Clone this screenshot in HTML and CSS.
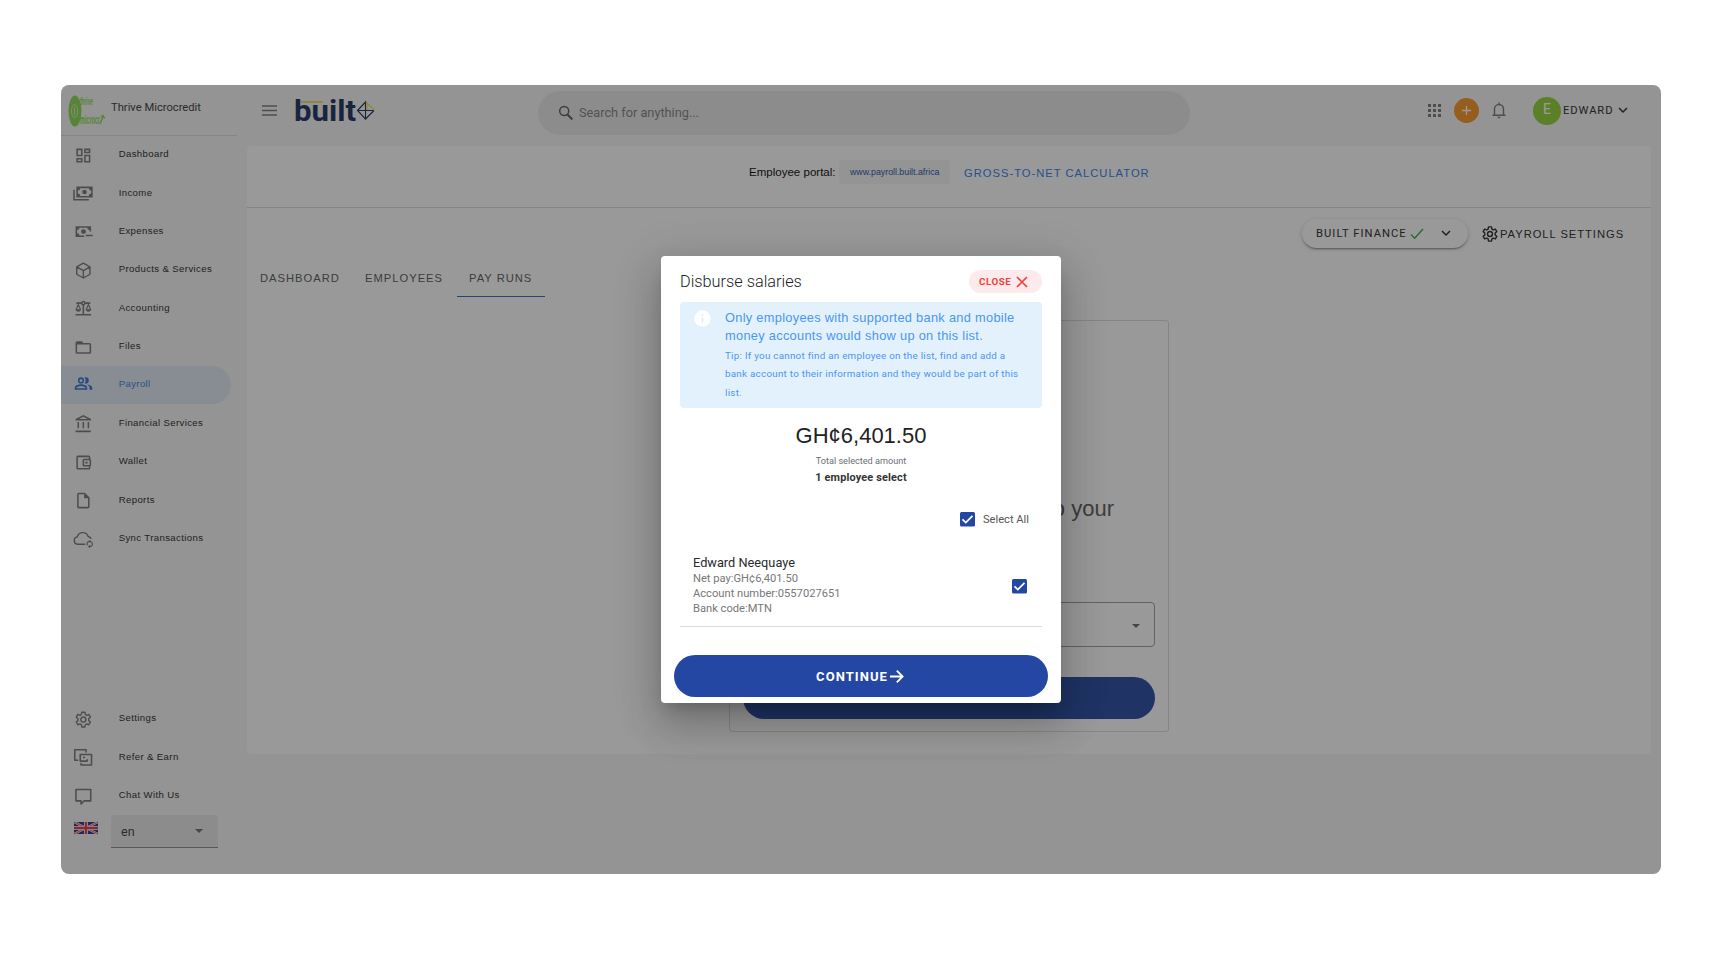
FILE: index.html
```html
<!DOCTYPE html>
<html lang="en">
<head>
<meta charset="utf-8">
<title>Built Payroll</title>
<link rel="stylesheet" href="styles.css">
</head>
<body>
<div class="window">
  <aside class="sidebar">
    <div class="company">
      <svg class="company-logo" width="38" height="40" viewBox="0 -3 38 40">
        <ellipse cx="7" cy="17" rx="6.500" ry="15.500"/>
        <ellipse cx="6.500" cy="17" rx="3" ry="6.500" fill="none" stroke="#cdeeb4" stroke-width="1"/>
        <path d="M6.500 13v8" stroke="#cdeeb4" stroke-width="1"/>
        <text x="12" y="11" font-size="11" textLength="13" lengthAdjust="spacingAndGlyphs">thrive</text>
        <text x="12" y="30" font-size="12" textLength="20" lengthAdjust="spacingAndGlyphs">microcr</text>
        <path d="M32 30l3.500-9M33 22l4 2" stroke="#86d94f" stroke-width="1.500"/>
      </svg>
      <span>Thrive Microcredit</span>
    </div>
    <nav class="nav">
      <a class="item"><svg class="ic" viewBox="0 0 24 24"><path d="M19 5v2h-4V5h4M9 5v6H5V5h4m10 8v6h-4v-6h4M9 17v2H5v-2h4M21 3h-8v6h8V3zM11 3H3v10h8V3zm10 8h-8v10h8V11zm-10 4H3v6h8v-6z"/></svg>Dashboard</a>
      <a class="item"><svg class="ic" viewBox="0 0 24 24"><path d="M3 3v14h21V3H3m5 12a3 3 0 0 0-3-3V8a3 3 0 0 0 3-3h11a3 3 0 0 0 3 3v4a3 3 0 0 0-3 3H8zM13.500 7a3 3 0 1 0 0 6 3 3 0 0 0 0-6zM-1 7h2v12h18v2H-1V7z" fill-rule="evenodd"/></svg>Income</a>
      <a class="item"><svg class="ic" viewBox="0 0 24 24"><path d="M2 5v14h11v-2H7a3 3 0 0 0-3-3v-4a3 3 0 0 0 3-3h10a3 3 0 0 0 3 3v2h2V5H2zm10 4a3 3 0 1 0 0 6 3 3 0 0 0 1.500-.4V14h1.100A3 3 0 0 0 12 9zm3 7h9v2h-9z"/></svg>Expenses</a>
      <a class="item"><svg class="ic" viewBox="0 0 24 24"><path d="M12 2.500l8.500 4.800v9.400L12 21.500l-8.500-4.800V7.300zM3.500 7.300L12 12l8.500-4.700M12 12v9.500" fill="none" stroke="#747474" stroke-width="1.800" stroke-linejoin="round"/></svg>Products &amp; Services</a>
      <a class="item"><svg class="ic" viewBox="0 0 24 24"><path d="M13 7.830A3 3 0 0 0 14.830 6H18l-3 7c0 1.660 1.570 3 3.500 3s3.500-1.340 3.500-3l-3-7h2V4h-6.170a3 3 0 0 0-5.660 0H3v2h2l-3 7c0 1.660 1.570 3 3.500 3S9 14.660 9 13L6 6h3.170A3 3 0 0 0 11 7.830V19H2v2h20v-2h-9V7.830zM20.370 13h-3.740l1.870-4.360L20.370 13zm-13 0H3.630L5.500 8.640 7.370 13zM12 6a1 1 0 1 1 0-2 1 1 0 0 1 0 2z"/></svg>Accounting</a>
      <a class="item"><svg class="ic" viewBox="0 0 24 24"><path d="M20 6h-8l-2-2H4a2 2 0 0 0-2 2v12a2 2 0 0 0 2 2h16a2 2 0 0 0 2-2V8a2 2 0 0 0-2-2zm0 12H4V8h16v10z"/></svg>Files</a>
      <a class="item active"><svg class="ic" viewBox="0 0 24 24"><path d="M16.500 13.100c2 1 3.500 2.400 3.500 4.400V20h3.500v-2.500c0-2.700-3.800-4.100-7-4.400zM15 12a4 4 0 0 0 0-8c-.5 0-1 .1-1.400.3a6 6 0 0 1 0 7.400c.4.200.9.300 1.400.300zM9 12a4 4 0 1 0 0-8 4 4 0 0 0 0 8zm0-6a2 2 0 1 1 0 4 2 2 0 0 1 0-4zM9 13c-2.700 0-8 1.300-8 4.500V20h16v-2.500C17 14.300 11.700 13 9 13zm6 5H3v-.5c0-1 3-2.500 6-2.500s6 1.500 6 2.500v.5z"/></svg>Payroll</a>
      <a class="item"><svg class="ic" viewBox="0 0 24 24"><path d="M6.500 10h-2v8h2v-8zm6.500 0h-2v8h2v-8zm8.500 11H2v2h19.500v-2zm-2-11h-2v8h2v-8zM12 3.260L17.500 6h-11L12 3.260M12 1L2 6v2h20V6L12 1z"/></svg>Financial Services</a>
      <a class="item"><svg class="ic" viewBox="0 0 24 24"><path d="M21 7.280V5a2 2 0 0 0-2-2H5a2 2 0 0 0-2 2v14a2 2 0 0 0 2 2h14a2 2 0 0 0 2-2v-2.280A2 2 0 0 0 22 15V9a2 2 0 0 0-1-1.720zM20 9v6h-7V9h7zM5 19V5h14v2h-6a2 2 0 0 0-2 2v6a2 2 0 0 0 2 2h6v2H5z"/><circle cx="16" cy="12" r="1.500"/></svg>Wallet</a>
      <a class="item"><svg class="ic" viewBox="0 0 24 24"><path d="M14 2H6a2 2 0 0 0-2 2v16a2 2 0 0 0 2 2h12a2 2 0 0 0 2-2V8l-6-6zM6 4h7v5h5v11H6V4z"/></svg>Reports</a>
      <a class="item"><svg class="ic wide" viewBox="0 0 24 24"><path d="M14.500 18H5a4.800 4.800 0 0 1-.8-9.500 7.300 7.300 0 0 1 14-.5c1.700.3 3.300 1.300 4 3" fill="none" stroke="#747474" stroke-width="1.800"/><path d="M17.300 19.500a3.300 3.300 0 0 1 3.700-5M22.500 15a3.300 3.300 0 0 1-2.500 5.800" fill="none" stroke="#747474" stroke-width="1.500"/><path d="M20 12.500l2.800 2-2.800 2zM20.600 18.500v4.500l-2.800-2.200z"/></svg>Sync Transactions</a>
    </nav>
    <nav class="nav nav-bottom">
      <a class="item"><svg class="ic" viewBox="0 0 24 24"><g fill="none" stroke="#747474" stroke-width="1.800" stroke-linejoin="round"><circle cx="12" cy="12" r="3.300"/><path d="M10 2.500h4l.5 2.900 1.900 1.100 2.700-1.100 2 3.500-2.200 1.800v2.600l2.200 1.800-2 3.500-2.700-1.100-1.900 1.100-.5 2.900h-4l-.5-2.900-1.900-1.100-2.700 1.100-2-3.500 2.200-1.800v-2.600L2.900 8.900l2-3.500 2.700 1.100 1.900-1.100z"/></g></svg>Settings</a>
      <a class="item"><svg class="ic wide" viewBox="0 0 24 24"><path d="M15.500 5.500V2H1v13.500h4.500M17 14v2.500H8V8h14.500v13.500H9V19M8 11.500V8M14 12h-2.500" fill="none" stroke="#747474" stroke-width="2" stroke-linejoin="round"/></svg>Refer &amp; Earn</a>
      <a class="item"><svg class="ic" viewBox="0 0 24 24"><path d="M2.500 3h19v14.500H13l-4 4v-4H2.500z" fill="none" stroke="#747474" stroke-width="2" stroke-linejoin="round"/></svg>Chat With Us</a>
    </nav>
    <div class="lang">
      <svg width="24" height="12" viewBox="0 0 24 12">
        <path fill="#1c2c8c" d="M0 0h24v12H0z"/>
        <path d="M0 0l24 12M24 0L0 12" stroke="#fff" stroke-width="2.200"/>
        <path d="M0 0l24 12M24 0L0 12" stroke="#e02f3c" stroke-width=".9"/>
        <path d="M12 0v12M0 6h24" stroke="#fff" stroke-width="4"/>
        <path d="M12 0v12M0 6h24" stroke="#e02f3c" stroke-width="2.400"/>
      </svg>
      <div class="lang-select"><span>en</span><i class="caret"></i></div>
    </div>
  </aside>

  <main class="main">
    <header class="topbar">
      <svg class="menu" width="15" height="11" viewBox="0 0 15 11"><path d="M0 1h15M0 5.500h15M0 10h15" stroke="#747474" stroke-width="1.500"/></svg>
      <svg class="brand" width="84" height="44" viewBox="0 -7 84 44">
        <text x="0" y="25" textLength="62" lengthAdjust="spacingAndGlyphs">built</text>
        <path d="M7 5.800h22" stroke="#f2d54a" stroke-width="1.800"/>
        <path d="M63.500 14.500L71.500 6v17zM71.500 23l8.500-8.500M63.500 14.500H80" fill="none" stroke="#14295a" stroke-width="1.100"/>
        <path d="M72 6l8.500 8.500M73 6v8" fill="none" stroke="#f2d54a" stroke-width="1.100"/>
      </svg>
      <div class="search">
        <svg width="16" height="16" viewBox="0 0 16 16"><circle cx="6.200" cy="6" r="4.500" fill="none" stroke="#555" stroke-width="1.500"/><path d="M9.500 9.500l4.800 5" stroke="#555" stroke-width="1.900"/></svg>
        <span>Search for anything...</span>
      </div>
      <div class="actions">
        <svg width="13" height="13" viewBox="0 0 13 13"><path d="M0 0h3v3H0zM5 0h3v3H5zM10 0h3v3h-3zM0 5h3v3H0zM5 5h3v3H5zM10 5h3v3h-3zM0 10h3v3H0zM5 10h3v3H5zM10 10h3v3h-3z" fill="#747474"/></svg>
        <span class="plus"><svg width="9" height="9" viewBox="0 0 9 9"><path d="M4.500 0v9M0 4.500h9" stroke="#fff" stroke-width="1.300"/></svg></span>
        <svg class="bell" width="14" height="17" viewBox="0 0 14 17"><path d="M.5 13.200h13M2.500 13V7a4.500 4.500 0 0 1 9 0v6M7 2.500V.5" fill="none" stroke="#747474" stroke-width="1.400"/><path d="M5.500 14.800h3a1.500 1.500 0 0 1-3 0z" fill="#747474"/></svg>
        <span class="avatar">E</span>
        <span class="user">EDWARD</span>
        <svg class="chev" width="10" height="7" viewBox="0 0 10 7"><path d="M1 1l4 4 4-4" fill="none" stroke="#222" stroke-width="1.500"/></svg>
      </div>
    </header>

    <section class="card">
      <div class="portal">
        <span class="portal-label">Employee portal:</span>
        <span class="chip">www.payroll.built.africa</span>
        <span class="gross">GROSS-TO-NET CALCULATOR</span>
      </div>
      <div class="tools">
        <div class="finance">
          <span>BUILT FINANCE</span>
          <svg class="tick" width="14" height="12" viewBox="0 0 14 12"><path d="M1 6.500l3.700 3.700L13 1" fill="none" stroke="#2ea84a" stroke-width="1.400"/></svg>
          <svg width="10" height="7" viewBox="0 0 10 7"><path d="M1 1l4 4 4-4" fill="none" stroke="#222" stroke-width="1.500"/></svg>
        </div>
        <svg class="set-gear" width="18" height="18" viewBox="0 0 24 24"><g fill="none" stroke="#222" stroke-width="1.900" stroke-linejoin="round"><circle cx="12" cy="12" r="3.300"/><path d="M10 2.500h4l.5 2.900 1.900 1.100 2.700-1.100 2 3.500-2.200 1.800v2.600l2.200 1.800-2 3.500-2.700-1.100-1.900 1.100-.5 2.900h-4l-.5-2.900-1.900-1.100-2.700 1.100-2-3.500 2.200-1.800v-2.600L2.900 8.900l2-3.500 2.700 1.100 1.900-1.100z"/></g></svg>
        <span class="set-label">PAYROLL SETTINGS</span>
      </div>
      <div class="tabs"><span>DASHBOARD</span><span>EMPLOYEES</span><span class="on">PAY RUNS</span></div>
      <div class="panel">
        <p class="panel-title">to your</p>
        <div class="panel-select"><i class="caret"></i></div>
        <div class="panel-button"></div>
      </div>
    </section>
  </main>

  <div class="overlay">
    <div class="dialog">
      <div class="dialog-head">
        <h2>Disburse salaries</h2>
        <button class="close"><span>CLOSE</span><svg width="12" height="12" viewBox="0 0 12 12"><path d="M1 1l10 10M11 1L1 11" stroke="#ef4136" stroke-width="1.700"/></svg></button>
      </div>
      <div class="alert">
        <svg width="17" height="17" viewBox="0 0 17 17"><circle cx="8.500" cy="8.500" r="8.200" fill="#fff"/><path d="M8.500 7.500v5M8.500 4.500v1.500" stroke="#dcecf8" stroke-width="1.400"/></svg>
        <div>
          <p class="alert-main">Only employees with supported bank and mobile<br>money accounts would show up on this list.</p>
          <p class="alert-tip">Tip: If you cannot find an employee on the list, find and add a<br>bank account to their information and they would be part of this<br>list.</p>
        </div>
      </div>
      <div class="amount">GH¢6,401.50</div>
      <div class="amount-label">Total selected amount</div>
      <div class="amount-count">1 employee select</div>
      <div class="select-all">
        <svg width="15" height="15" viewBox="0 0 15 15"><rect width="15" height="14.500" rx="1.500" fill="#2347a2"/><path d="M2.500 7.300l3.300 3.300 6.700-6.800" fill="none" stroke="#fff" stroke-width="1.700"/></svg>
        <span>Select All</span>
      </div>
      <div class="employee">
        <div>
          <p class="name">Edward Neequaye</p>
          <p>Net pay:GH¢6,401.50</p>
          <p>Account number:0557027651</p>
          <p>Bank code:MTN</p>
        </div>
        <svg width="15" height="15" viewBox="0 0 15 15"><rect width="15" height="14.500" rx="1.500" fill="#2347a2"/><path d="M2.500 7.300l3.300 3.300 6.700-6.800" fill="none" stroke="#fff" stroke-width="1.700"/></svg>
      </div>
      <button class="continue"><span>CONTINUE</span><svg width="14" height="13" viewBox="0 0 14 13"><path d="M0 6.500h12.500M6.800.7l5.800 5.800-5.800 5.800" fill="none" stroke="#fff" stroke-width="1.800"/></svg></button>
    </div>
  </div>
</div>
</body>
</html>
```
FILE: styles.css
```css
* { box-sizing: border-box; }
body { margin: 0; padding: 85px 61px; background: #fff; font-family: Roboto, "Liberation Sans", sans-serif; color: #222; }
p, h2 { margin: 0; }
svg { display: block; flex: none; overflow: visible; }
button { border: 0; font-family: inherit; padding: 0; }
span, a { white-space: nowrap; }

.window { position: relative; display: flex; width: 1600px; height: 789px; border-radius: 8px; overflow: hidden; background: #f6f6f6; }

.sidebar { width: 186px; flex: none; display: flex; flex-direction: column; }
.company { display: flex; width: 176px; height: 51px; border-bottom: 1px solid #dadada; padding: 6px 0 0 7px; font-size: 11.2px; line-height: 33px; gap: 5px; }
.company-logo { fill: #86d94f; font-family: "Liberation Sans", sans-serif; font-weight: 700; }
.company span { color: #333; }
.nav { display: flex; flex-direction: column; width: 170px; }
.item { display: flex; align-items: center; gap: 26px; height: 38.4px; padding: 0 0 3px 13px; font: 9.6px "Liberation Sans", sans-serif; letter-spacing: 0.37px; color: #222; }
.ic { width: 18.700px; height: 19.2px; fill: #747474; position: relative; top: 1.500px; }
.active { background: #dfe9f5; color: #2f7de0; border-radius: 0 19px 19px 0; position: relative; top: -0.500px; }
.active .ic { fill: #2f6fd0; top: 0.5px; }
.nav-bottom { margin-top: 142px; }
.lang { display: flex; padding-left: 13px; gap: 13px; }
.lang svg { margin-top: 7px; }
.lang-select { width: 107px; height: 33px; background: #e8e8e8; border-bottom: 1px solid #888; border-radius: 4px 4px 0 0; display: flex; align-items: center; justify-content: space-between; padding: 0 15px 0 10px; font-size: 12.500px; color: #333; }
.caret { border: 4px solid transparent; border-top-color: #666; border-bottom: 0; }

.main { width: 1404px; flex: none; }
.topbar { display: flex; height: 61px; }
.menu { margin: 20px 0 0 15px; }
.brand { margin: 4px 0 0 17px; fill: #14295a; font: 700 29px Roboto, sans-serif; }
.search { margin: 6px 0 0 160px; width: 652px; height: 44px; border-radius: 22px; background: #e8e8e8; display: flex; align-items: center; padding: 0 0 2px 20px; gap: 5px; font-size: 12.740px; color: #7d7d7d; flex: none; }
.search svg { margin-top: 2px; }
.actions { display: flex; align-items: center; height: 51px; margin-left: 238px; }
.plus { width: 25px; height: 25px; border-radius: 50%; background: #f7931e; display: flex; align-items: center; justify-content: center; margin: 0 13px; }
.avatar { width: 28px; height: 28px; border-radius: 50%; background: #8ed12f; color: #fff; font-size: 14px; line-height: 25px; text-align: center; margin: 0 2px 0 27px; }
.user { font-size: 11.2px; letter-spacing: .92px; }
.chev { margin: 0 0 0 5px; }

.card { background: #fff; height: 608px; border-radius: 4px; }
.portal { height: 62px; border-bottom: 1px solid #dadada; display: flex; align-items: flex-start; padding: 14px 0 0 502px; font-family: "Liberation Sans", sans-serif; }
.portal-label { font-size: 11.540px; line-height: 24px; color: #000; width: 90px; }
.chip { width: 111px; height: 24px; border-radius: 3px; background: #f6f6f6; font-size: 8.800px; line-height: 24px; padding-left: 11px; color: #174ea6; }
.gross { margin-left: 14px; font-size: 11.2px; letter-spacing: 1px; line-height: 27px; color: #2979e8; }
.tools { display: flex; align-items: center; height: 51px; padding-left: 1055px; }
.finance { width: 166px; height: 29px; border-radius: 15px; box-shadow: 0 2px 2px -1px rgba(0,0,0,.4), 0 1px 4px rgba(0,0,0,.2); display: flex; align-items: center; padding-left: 14px; font-size: 11.2px; letter-spacing: 1.040px; color: #222; }
.tick { margin: 0 17px 0 3px; }
.set-gear { margin: 0 1px 0 13px; }
.set-label { font: 11.2px "Liberation Sans", sans-serif; letter-spacing: .97px; }
.tabs { display: flex; height: 38px; font: 11.2px "Liberation Sans", sans-serif; letter-spacing: 1px; color: #555; line-height: 38px; }
.tabs span { line-height: 38px; padding-left: 13px; width: 105px; }
.tabs .on { width: 88px; padding-left: 12px; border-bottom: 1px solid #2563c7; margin-left: 0; }
.panel { width: 440px; height: 412px; margin: 23px 0 0 482px; border: 1px solid #dadada; border-radius: 3px; padding: 175px 13px 0; }
.panel-title { font: 22px "Liberation Sans", sans-serif; line-height: 26px; color: #555; text-align: right; padding-right: 41px; }
.panel-select { height: 45px; margin-top: 80px; border: 1px solid #999; border-radius: 4px; display: flex; align-items: center; justify-content: flex-end; padding: 2px 14px 0 0; }
.panel-button { height: 42px; margin-top: 30px; border-radius: 21px; background: #1f45a0; }

.overlay { position: absolute; inset: 0; background: rgba(33,33,33,.46); display: flex; justify-content: center; align-items: flex-start; padding-top: 171px; }
.dialog { width: 400px; height: 447px; border-radius: 4px; background: #fff; padding: 14px 19px 0; box-shadow: 0 11px 15px -7px rgba(0,0,0,.2), 0 24px 38px 3px rgba(0,0,0,.14), 0 9px 46px 8px rgba(0,0,0,.12); }
.dialog-head { display: flex; justify-content: space-between; height: 32px; }
h2 { font-size: 16.300px; font-weight: 300; line-height: 23px; color: #222; }
.close { width: 73px; height: 23px; border-radius: 12px; background: #fdeaed; color: #ef4136; font-size: 9.800px; font-weight: 700; letter-spacing: .5px; display: flex; align-items: center; gap: 5px; padding-left: 10px; }
.alert { height: 106px; border-radius: 4px; background: #e3f1fd; display: flex; gap: 14px; padding: 7px 0 0 14px; color: #4a96f3; }
.alert svg { margin-top: 1px; }
.alert-main { font-family: "Liberation Sans", sans-serif; font-size: 12.800px; line-height: 18px; letter-spacing: .3px; }
.alert-tip { font-size: 9.800px; line-height: 18.400px; letter-spacing: .27px; padding-top: 2px; }
.amount { text-align: center; font: 22px "Liberation Sans", sans-serif; line-height: 28px; margin-top: 14px; color: #222; }
.amount-label { text-align: center; font-size: 9.130px; line-height: 14px; margin-top: 4px; color: #6a6f78; }
.amount-count { text-align: center; font-size: 10.900px; font-weight: 700; letter-spacing: .16px; line-height: 14px; margin-top: 3px; color: #333; }
.select-all { display: flex; justify-content: flex-end; align-items: center; gap: 8.500px; height: 16px; margin-top: 26px; padding-right: 13px; font-size: 11.130px; color: #555; }
.employee { display: flex; justify-content: space-between; align-items: flex-start; height: 100px; border-bottom: 1px solid #dcdce0; padding: 28px 15px 0 13px; font-size: 11.170px; line-height: 15px; color: #777; }
.employee .name { font-size: 12.770px; line-height: 16px; color: #2a2a2a; }
.employee svg { margin-top: 24px; }
.continue { width: 374px; height: 42px; margin: 28px 0 0 -6px; border-radius: 21px; background: #2347a2; color: #fff; font-size: 13px; font-weight: 700; letter-spacing: 1.050px; display: flex; align-items: center; justify-content: center; gap: 2px; padding-right: 2px; }
```
